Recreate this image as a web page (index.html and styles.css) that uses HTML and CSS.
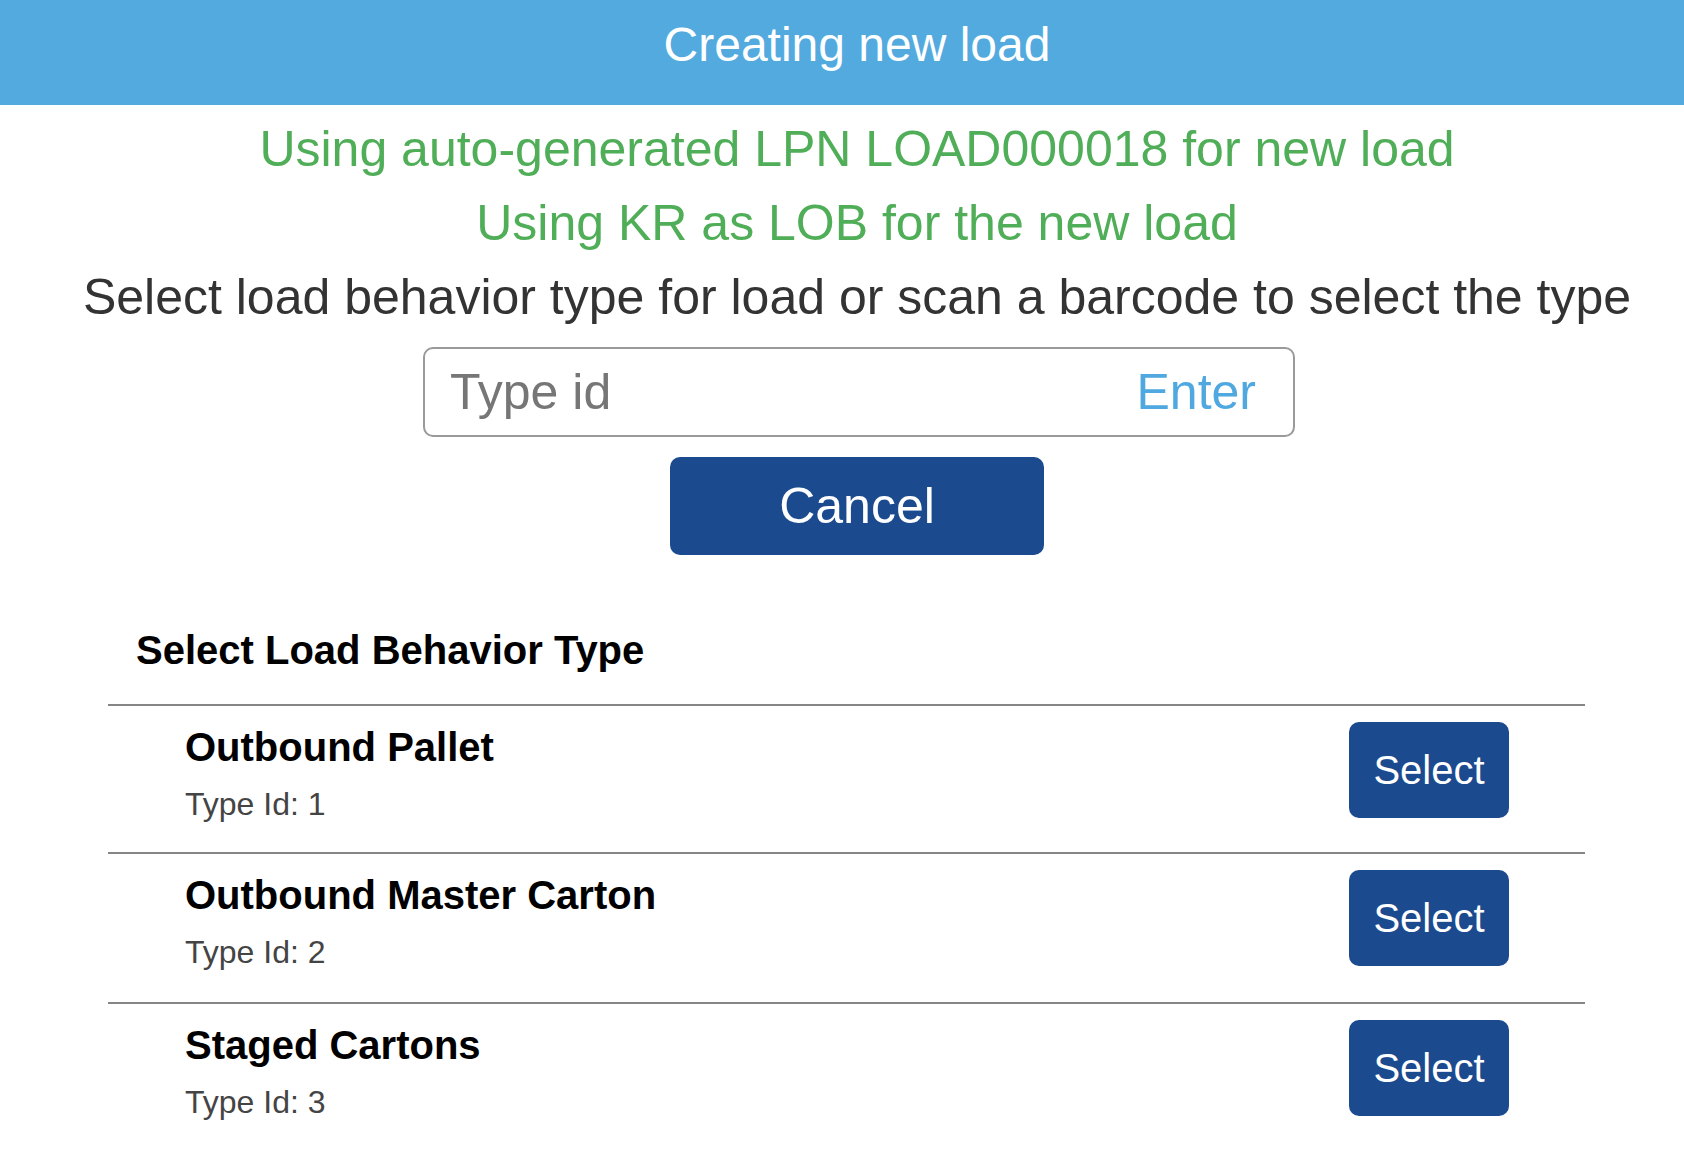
FILE: index.html
```html
<!DOCTYPE html>
<html lang="en">
<head>
<meta charset="utf-8">
<title>Creating new load</title>
<link rel="stylesheet" href="styles.css">
</head>
<body>
<div class="page">
  <header class="topbar">
    <h1 class="title">Creating new load</h1>
  </header>
  <main class="content">
    <p class="msg msg-ok">Using auto-generated LPN LOAD000018 for new load</p>
    <p class="msg msg-ok">Using KR as LOB for the new load</p>
    <p class="msg msg-prompt">Select load behavior type for load or scan a barcode to select the type</p>
    <form class="scan">
      <div class="scan-field">
        <input class="scan-input" type="text" placeholder="Type id">
        <button class="scan-enter" type="button">Enter</button>
      </div>
      <button class="btn btn-cancel" type="button">Cancel</button>
    </form>
    <section class="list">
      <h2 class="list-title">Select Load Behavior Type</h2>
      <ul class="rows">
        <li class="row">
          <div class="row-text">
            <div class="row-name">Outbound Pallet</div>
            <div class="row-id">Type Id: 1</div>
          </div>
          <button class="btn btn-select" type="button">Select</button>
        </li>
        <li class="row">
          <div class="row-text">
            <div class="row-name">Outbound Master Carton</div>
            <div class="row-id">Type Id: 2</div>
          </div>
          <button class="btn btn-select" type="button">Select</button>
        </li>
        <li class="row">
          <div class="row-text">
            <div class="row-name">Staged Cartons</div>
            <div class="row-id">Type Id: 3</div>
          </div>
          <button class="btn btn-select" type="button">Select</button>
        </li>
      </ul>
    </section>
  </main>
</div>
</body>
</html>
```
FILE: styles.css
```css
html, body {
  margin: 0;
  padding: 0;
  overflow: hidden;
}
body {
  font-family: "Liberation Sans", Arial, Helvetica, sans-serif;
  background: #ffffff;
}
.page {
  width: 1714px;
}
.topbar {
  background: #53aadf;
  height: 105px;
  box-sizing: border-box;
  padding-top: 15px;
}
.title {
  margin: 0;
  font-size: 48px;
  font-weight: normal;
  line-height: 60px;
  color: #ffffff;
  text-align: center;
}
.content {
  display: flex;
  flex-direction: column;
  align-items: center;
  padding-top: 7px;
}
.msg {
  margin: 0;
  font-size: 50px;
  line-height: 74px;
  text-align: center;
}
.msg-ok {
  color: #4fae57;
}
.msg-prompt {
  color: #333333;
}
.scan {
  display: flex;
  flex-direction: column;
  align-items: center;
  gap: 20px;
  margin: 13px 0 0;
}
.scan-field {
  width: 872px;
  height: 90px;
  box-sizing: border-box;
  margin-left: 4px;
  border: 2px solid #9a9a9a;
  border-radius: 10px;
  display: flex;
  align-items: center;
  padding: 0 37px 0 25px;
}
.scan-input {
  flex: 1;
  min-width: 0;
  border: 0;
  outline: 0;
  padding: 0;
  background: transparent;
  font-family: inherit;
  font-size: 50px;
  color: #333333;
}
.scan-input::placeholder {
  color: #767676;
}
.scan-enter {
  border: 0;
  background: none;
  padding: 0;
  font-family: inherit;
  font-size: 50px;
  color: #4fa8df;
}
.btn {
  background: #1c4a8f;
  color: #ffffff;
  border: 0;
  border-radius: 10px;
  font-family: inherit;
  padding: 0;
}
.btn-cancel {
  width: 374px;
  height: 98px;
  font-size: 50px;
}
.list {
  align-self: flex-start;
  margin: 71px 0 0 108px;
  width: 1477px;
}
.list-title {
  margin: 0 0 30px;
  padding-left: 28px;
  font-size: 40px;
  line-height: 48px;
  font-weight: bold;
  color: #000000;
}
.rows {
  list-style: none;
  margin: 0;
  padding: 0;
}
.row {
  display: flex;
  justify-content: space-between;
  align-items: flex-start;
  border-top: 2px solid #858585;
  padding: 16px 76px 28px 77px;
}
.row + .row {
  padding-bottom: 30px;
}
.row-name {
  font-size: 40px;
  font-weight: bold;
  line-height: 50px;
  color: #000000;
}
.row-id {
  margin-top: 12px;
  font-size: 32px;
  line-height: 40px;
  color: #444444;
}
.btn-select {
  width: 160px;
  height: 96px;
  font-size: 40px;
}
```
